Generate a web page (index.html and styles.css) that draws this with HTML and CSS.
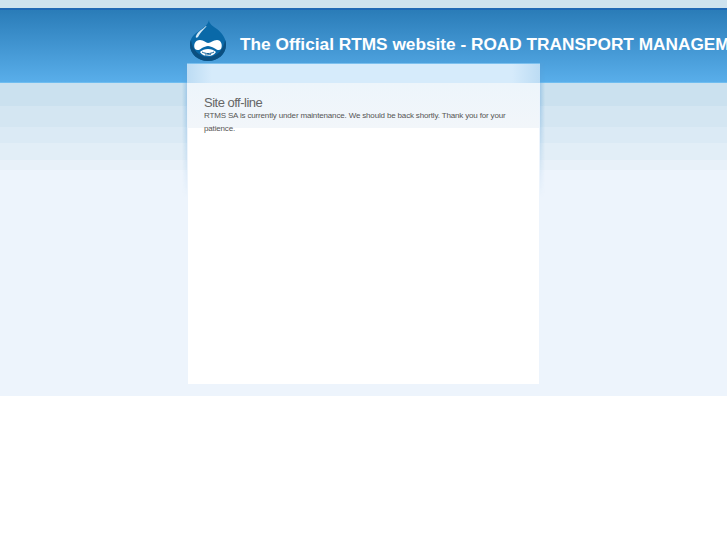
FILE: index.html
```html
<!DOCTYPE html>
<html lang="en">
<head>
  <meta charset="UTF-8" />
  <title>Site off-line | The Official RTMS website</title>
  <link rel="stylesheet" href="styles.css">
</head>
<body>
  <div class="page">
    <div class="topstrip"></div>
    <div class="header">
      <div class="brand">
        <svg class="logo" width="38" height="41" viewBox="0 0 38 41">
          <path d="M20 0c0 4 4 6 8 9 5 4 9 9 9 16 0 9-8 16-18 16S1 34 1 25c0-7 4-11 9-14 4-3 9-6 10-11z" fill="#0a69a8"/>
          <path d="M1 25c0 9 8 16 18 16s18-7 18-16c0-2 0-3-1-5-1 9-8 17-17 17S3 29 2 20c-1 2-1 3-1 5z" fill="#0b4f80"/>
          <path d="M17 6c-3 3-8 5-10 10-1 2 1 2 2 1 2-4 5-7 7-9 1-1 2-2 1-2z" fill="#d5e9f6"/>
          <path d="M6 29c-2-4 0-9 5-9 4 0 6 3 8 3 3 0 5-3 9-3 4 0 6 5 4 9-2 2-4 1-7-1-2-1-4-2-6-2s-4 1-6 2c-2 2-5 3-7 1z" fill="#fff"/>
          <path d="M11 32c2-2 5-3 8-3s6 1 8 3c-2 3-5 4-8 4s-6-1-8-4z" fill="#fff"/>
          <path d="M13 32c4 2 8 2 12 0M16 35c2 0 4 0 6-1" fill="none" stroke="#0b5d96" stroke-width="1"/>
        </svg>
        <h1>The Official RTMS website - ROAD TRANSPORT MANAGEMENT SYSTEM</h1>
      </div>
    </div>
    <div class="card">
      <div class="card-top"></div>
      <div class="card-body">
        <h2>Site off-line</h2>
        <p>RTMS SA is currently under maintenance. We should be back shortly. Thank you for your patience.</p>
      </div>
    </div>
  </div>
</body>
</html>
```

FILE: styles.css
```css
* { box-sizing: border-box; }
html, body { overflow: hidden; }
body {
  margin: 0;
  background: #fff;
  font-family: "Liberation Sans", Arial, sans-serif;
}
.page {
  height: 396px;
  background: linear-gradient(to bottom,
    #cbe1ef 83px, #cbe1ef 106px,
    #d4e6f2 106px, #d4e6f2 127px,
    #dbeaf5 127px, #dbeaf5 143px,
    #e2eef7 143px, #e2eef7 160px,
    #e8f1f9 160px, #e8f1f9 170px,
    #edf4fc 170px);
}
.topstrip { height: 8px; background: #cfe3ef; }
.header {
  height: 75px;
  border-top: 2px solid #2069b5;
  border-bottom: 1px solid #6fbdf0;
  background: linear-gradient(to bottom, #2a7cb8, #59aeea);
  overflow: hidden;
}
.brand {
  display: flex;
  align-items: flex-start;
  gap: 13px;
  width: 353px;
  margin: 0 auto;
  padding: 10px 0 0 2px;
}
.logo { flex: none; }
h1 {
  margin: 14px 0 0;
  font-size: 17.25px;
  line-height: 20px;
  font-weight: bold;
  color: #fff;
  white-space: nowrap;
}
.card {
  position: relative;
  width: 353px;
  height: 321px;
  margin: -20px auto 0;
  background: #fff;
}
.card::before {
  content: "";
  position: absolute;
  top: 0;
  left: -5px;
  right: -5px;
  height: 135px;
  background: linear-gradient(to right, rgba(90,160,215,0) 0, rgba(90,160,215,0.35) 5px, transparent 5px, transparent 358px, rgba(90,160,215,0.35) 358px, rgba(90,160,215,0) 363px);
  -webkit-mask-image: linear-gradient(to bottom, #000 30%, transparent);
  mask-image: linear-gradient(to bottom, #000 30%, transparent);
}
.card-top {
  position: relative;
  height: 20px;
  border-top: 1px solid #7cc0ee;
  background: linear-gradient(to right, #bcdcf4, #d6ebfb 25px, #d6ebfb 325px, #bcdcf4);
}
.card-body {
  position: relative;
  height: 301px;
  padding: 12px 16px 0;
  border-left: 1px solid #edf4fc;
  border-right: 1px solid #edf4fc;
  background: linear-gradient(to bottom, #edf5fb, #f2f6fa 45px, #fff 45px);
}
h2 {
  margin: 0;
  font-size: 13px;
  letter-spacing: -0.5px;
  font-weight: normal;
  line-height: 15px;
  color: #666;
}
p {
  margin: -1px 0 0;
  font-size: 8px;
  letter-spacing: -0.16px;
  line-height: 13px;
  color: #555;
}
```
